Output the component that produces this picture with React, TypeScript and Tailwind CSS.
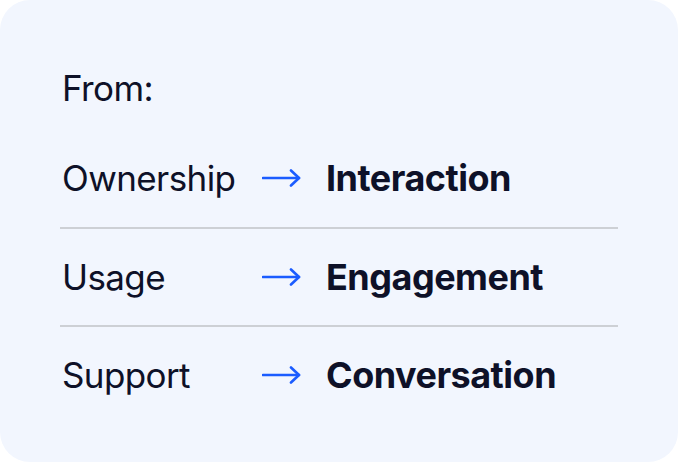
const rows = [
  { from: "Ownership", to: "Interaction" },
  { from: "Usage", to: "Engagement" },
  { from: "Support", to: "Conversation" },
];

function Arrow() {
  return (
    <svg width="40" height="18" viewBox="0 0 40 18" fill="none" className="shrink-0">
      <path d="M1 9H37" stroke="#1b5cff" strokeWidth="2.6" strokeLinecap="round" />
      <path d="M29 1.5L37 9L29 16.5" stroke="#1b5cff" strokeWidth="2.6" strokeLinecap="round" strokeLinejoin="round" />
    </svg>
  );
}

export default function App() {
  return (
    <div className="h-[462px] w-[678px] bg-white">
      <div
        className="h-full w-full rounded-[30px] bg-[#f2f6fe] pl-[60px] pr-[60px] pt-[68px] text-[#0e1128]"
        style={{ fontFamily: "Inter, 'Liberation Sans', sans-serif" }}
      >
        <div className="h-[40px] pl-[2px] text-[35px] leading-[40px] tracking-[-0.6px]">From:</div>
        <div className="mt-[21px]">
          {rows.map((r, i) => (
            <div
              key={r.from}
              className={`flex h-[98px] items-center ${i > 0 ? "border-t-2 border-[#cdd0d5]" : ""}`}
            >
              <div className="w-[202px] pl-[2px] text-[35px] tracking-[-0.6px]">{r.from}</div>
              <Arrow />
              <div className="ml-[24px] text-[36px] font-bold tracking-[-0.5px]">{r.to}</div>
            </div>
          ))}
        </div>
      </div>
    </div>
  );
}
